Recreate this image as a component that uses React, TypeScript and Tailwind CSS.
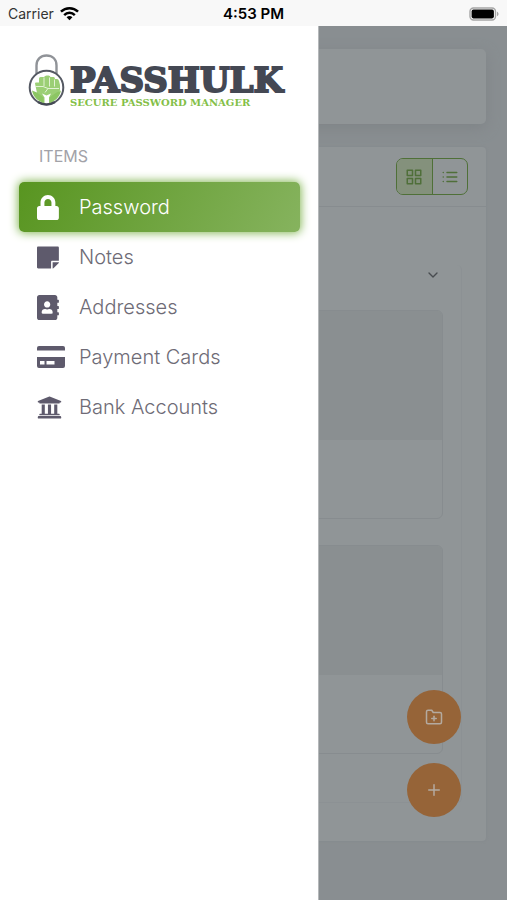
import type { SVGProps } from "react";
import { FaAddressBook, FaLock, FaStickyNote, FaUniversity } from "react-icons/fa";
import { FiChevronDown, FiFolderPlus, FiGrid, FiList, FiPlus } from "react-icons/fi";

function CardIcon(props: SVGProps<SVGSVGElement>) {
  return (
    <svg viewBox="0 0 28 22" fill="currentColor" {...props}>
      <path d="M0 4.500V2Q0 0 2 0h24q2 0 2 2v2.500Z" />
      <path fillRule="evenodd" d="M0 11h28v9q0 2-2 2H2q-2 0-2-2Zm3 4v3.500h4.500v-3.500Zm6.500 0v3.500h8v-3.500Z" />
    </svg>
  );
}

const items = [
  { label: "Password", Icon: FaLock, iconClass: "h-[25px] w-[22px]", active: true },
  { label: "Notes", Icon: FaStickyNote, iconClass: "h-[25px] w-[22px]", active: false },
  { label: "Addresses", Icon: FaAddressBook, iconClass: "h-[25px] w-[22px]", active: false },
  { label: "Payment Cards", Icon: CardIcon, iconClass: "h-[22px] w-[28px]", active: false },
  { label: "Bank Accounts", Icon: FaUniversity, iconClass: "h-[25px] w-[25px]", active: false },
];

function StatusBar() {
  return (
    <div className="grid h-[26px] shrink-0 grid-cols-3 items-center bg-[#f8f8f8] px-2 pt-px text-sm text-black">
      <div className="flex items-center gap-[6px] text-[#333]">
        <span>Carrier</span>
        <svg viewBox="0 0 20 15" className="h-[15px] w-[19px]" fill="none" stroke="#000" strokeWidth="2.6">
          <path d="M1 5.6a13 13 0 0 1 18 0" />
          <path d="M4.4 9.1a8 8 0 0 1 11.2 0" />
          <path d="M10 14.6 6.9 11.5a4.5 4.5 0 0 1 6.2 0Z" fill="#000" stroke="none" />
        </svg>
      </div>
      <span className="text-center text-[15px] font-semibold">4:53 PM</span>
      <svg viewBox="0 0 30 14" className="h-[14px] w-[30px] justify-self-end">
        <rect x="1" y="1" width="25.5" height="12" rx="3.5" fill="#f8f8f8" stroke="#a5a5a5" strokeWidth="1.4" />
        <rect x="2.6" y="2.6" width="22.3" height="8.8" rx="1.8" fill="#000" />
        <path d="M28 4.8c2 .7 2 3.7 0 4.4Z" fill="#a5a5a5" />
      </svg>
    </div>
  );
}

function LogoMark() {
  return (
    <svg viewBox="0 0 38 52" className="h-[52px] w-[38px] shrink-0" fill="none">
      <path d="M8.5 20V11.5C8.5 5 12.8 1.5 18.5 1.5S28.500 5 28.500 11.500V20" stroke="#909398" strokeWidth="2.4" />
      <circle cx="18.500" cy="33.500" r="16.800" fill="#fff" stroke="#555963" strokeWidth="2" />
      <path d="M7 29.500q0-1 1-1h3v-4q0-1.500 1.500-1.500h3.500q1-1.500 2.500-1.500h2q1.500 0 2 1.500h3q1.500 0 1.500 2h2q1.500 0 2 2l1 4v5.500l-4 4.500-3 2.500v6a15 15 0 0 1-11.500 0V44l-4.500-5Z" fill="#9bcf75" />
      <path d="M4 36.500c1.500 7 6 11 11.500 12v-5l-6.500-5Z" fill="#8cc663" />
      <path d="M33 36.500c-1.500 7-6 11-11.500 12v-5l7-5Z" fill="#8cc663" />
      <path d="M16 23.500v8.500M21.500 23.500v9M26.500 25.500v7M7 32.500h8l5 2-3 4M20 34.500h11" stroke="#e2f2d5" strokeWidth="1" />
      <path d="m14 39.500 4.500 2 4.500-2-2 4V50h-4.500v-6.500Z" fill="#fff" />
      <path d="M10 48a16.800 16.800 0 0 0 17 0" stroke="#444954" strokeWidth="2.600" />
    </svg>
  );
}

function Drawer() {
  return (
    <aside className="absolute inset-y-0 left-0 w-[319px] border-r border-[#b5b8ba] bg-white px-[18px] pt-7">
      <div className="flex pl-[10px]">
        <LogoMark />
        <div className="flex flex-col pt-[10px] pl-[4px] font-['DejaVu_Serif','Liberation_Serif',serif] font-bold whitespace-nowrap">
          <span className="text-[34px] leading-[32px] text-[#444853] [-webkit-text-stroke:2px_#444853]">PASSHULK</span>
          <span className="pt-[2px] text-[10px] leading-[10px] text-[#84bf48]">SECURE PASSWORD MANAGER</span>
        </div>
      </div>
      <h2 className="mt-[38px] pl-[21px] text-base leading-5 text-[#a2a2a8]">ITEMS</h2>
      <nav className="mt-4 ml-px">
        <ul>
          {items.map(({ label, Icon, iconClass, active }) => (
            <li key={label}>
              <a
                href="#"
                className={
                  active
                    ? "flex h-[50px] items-center rounded-[5px] bg-linear-[118deg] from-[#589520] to-[#86b35e] pl-[18px] text-white shadow-[0_0_10px_1px_#83b653]"
                    : "flex h-[50px] items-center pl-[18px] text-[#6e6b76]"
                }
              >
                <span className="flex w-[42px] shrink-0">
                  <Icon preserveAspectRatio="xMinYMid meet" className={active ? iconClass : `${iconClass} text-[#5e5a6c]`} />
                </span>
                <span className="text-[20px] leading-6 font-light">{label}</span>
              </a>
            </li>
          ))}
        </ul>
      </nav>
    </aside>
  );
}

function VaultCard() {
  return (
    <article className="h-[209px] overflow-hidden rounded-[6px] border border-[#878c8f]">
      <div className="h-[129px] bg-[#8a8f91]" />
    </article>
  );
}

function Page() {
  return (
    <main className="h-full bg-[#898e91] pt-[23px] pr-[21px] pl-5">
      <section className="h-[75px] rounded-[5px] bg-[#909597] shadow-[0_4px_14px_#7f8487]" />
      <section className="mt-[23px] h-[694px] rounded-[4px] bg-[#909597] shadow-[0_0_3px_#84898c]">
        <header className="flex h-[60px] items-center justify-end border-b border-[#878c8f] pr-[18px]">
          <div className="flex h-[37px] w-[72px] overflow-hidden rounded-[7px] border border-[#4f7038]">
            <button type="button" aria-label="Grid view" className="flex flex-1 items-center justify-center border-r border-[#4f7038] bg-[#84917c] text-[#4f6f39]">
              <FiGrid className="size-[18px]" />
            </button>
            <button type="button" aria-label="List view" className="flex flex-1 items-center justify-center text-[#4f6f39]">
              <FiList className="size-[18px]" />
            </button>
          </div>
        </header>
        <div className="mt-[58px] mr-6 h-[538px] rounded-[5px] border-r border-b border-[#8c9194] pr-[18px] pl-6">
          <div className="flex h-[45px] justify-end">
            <button type="button" aria-label="Collapse" className="flex h-5 w-5 items-center justify-center text-[#484c50]">
              <FiChevronDown className="size-4" />
            </button>
          </div>
          <div className="flex flex-col gap-[26px]">
            <VaultCard />
            <VaultCard />
          </div>
        </div>
      </section>
      <div className="absolute right-[46px] bottom-[83px] flex flex-col gap-[19px]">
        <button type="button" aria-label="Add folder" className="flex size-[54px] items-center justify-center rounded-full bg-[#966438] text-[#b4aaa0]">
          <FiFolderPlus className="size-[18px]" />
        </button>
        <button type="button" aria-label="Add item" className="flex size-[54px] items-center justify-center rounded-full bg-[#966438] text-[#b4aaa0]">
          <FiPlus className="size-[18px]" />
        </button>
      </div>
    </main>
  );
}

export default function App() {
  return (
    <div className="flex h-screen flex-col overflow-hidden font-[Inter,'Liberation_Sans',sans-serif]">
      <StatusBar />
      <div className="relative min-h-0 flex-1 overflow-hidden">
        <Page />
        <Drawer />
      </div>
    </div>
  );
}
